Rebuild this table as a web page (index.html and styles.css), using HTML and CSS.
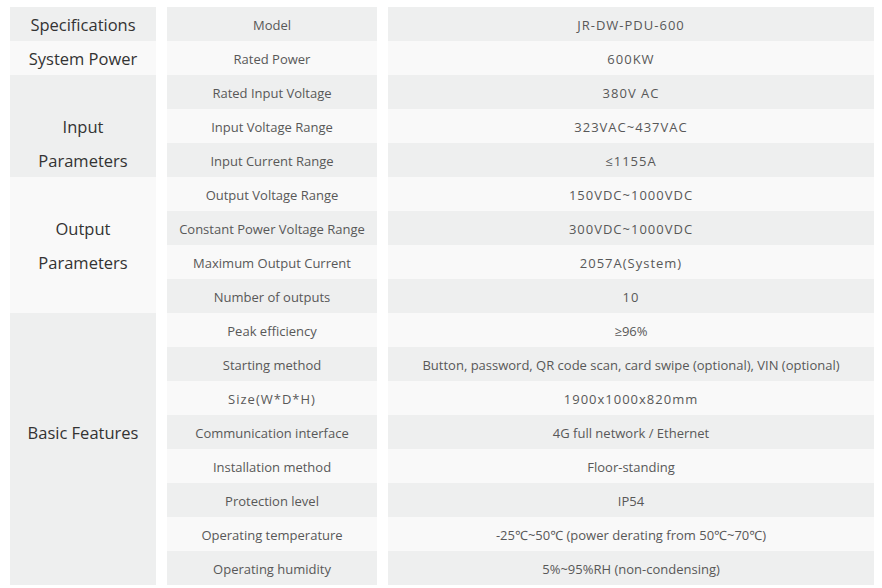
FILE: index.html
```html
<!DOCTYPE html>
<html>
<head>
<meta charset="utf-8">
<link rel="stylesheet" href="styles.css">
</head>
<body>
<div class="spec">
  <div class="group dark">Specifications</div>
  <div class="label dark">Model</div>
  <div class="value dark num">JR-DW-PDU-600</div>

  <div class="group light">System Power</div>
  <div class="label light">Rated Power</div>
  <div class="value light num">600KW</div>

  <div class="group dark span3 pad-top">Input<br>Parameters</div>
  <div class="label dark">Rated Input Voltage</div>
  <div class="value dark num">380V AC</div>
  <div class="label light">Input Voltage Range</div>
  <div class="value light num">323VAC~437VAC</div>
  <div class="label dark">Input Current Range</div>
  <div class="value dark num">≤1155A</div>

  <div class="group light span4">Output<br>Parameters</div>
  <div class="label light">Output Voltage Range</div>
  <div class="value light num">150VDC~1000VDC</div>
  <div class="label dark">Constant Power Voltage Range</div>
  <div class="value dark num">300VDC~1000VDC</div>
  <div class="label light">Maximum Output Current</div>
  <div class="value light num">2057A(System)</div>
  <div class="label dark">Number of outputs</div>
  <div class="value dark num">10</div>

  <div class="group dark span8 pad-bottom">Basic Features</div>
  <div class="label light">Peak efficiency</div>
  <div class="value light">≥96%</div>
  <div class="label dark">Starting method</div>
  <div class="value dark">Button, password, QR code scan, card swipe (optional), VIN (optional)</div>
  <div class="label light num">Size(W*D*H)</div>
  <div class="value light num">1900x1000x820mm</div>
  <div class="label dark">Communication interface</div>
  <div class="value dark">4G full network / Ethernet</div>
  <div class="label light">Installation method</div>
  <div class="value light">Floor-standing</div>
  <div class="label dark">Protection level</div>
  <div class="value dark">IP54</div>
  <div class="label light">Operating temperature</div>
  <div class="value light">-25℃~50℃ (power derating from 50℃~70℃)</div>
  <div class="label dark">Operating humidity</div>
  <div class="value dark">5%~95%RH (non-condensing)</div>
</div>
</body>
</html>
```
FILE: styles.css
```css
html, body {
  margin: 0;
  padding: 0;
  background: #ffffff;
}
.spec {
  display: grid;
  grid-template-columns: 146px 210px 486px;
  grid-auto-rows: 34px;
  column-gap: 11px;
  padding: 7px 0 0 10px;
  font-family: "Open Sans", "Noto Sans", sans-serif;
}
.dark { background: #eeefef; }
.light { background: #f9f9f9; }
.group {
  grid-column: 1;
  display: flex;
  align-items: center;
  justify-content: center;
  text-align: center;
  font-size: 16.5px;
  line-height: 34px;
  color: #333333;
  padding-top: 1px;
}
.span3 { grid-row: span 3; }
.span4 { grid-row: span 4; }
.span8 { grid-row: span 8; }
.group.pad-top { padding-top: 35px; }
.group.pad-bottom { padding-bottom: 34px; }
.label, .value {
  display: flex;
  align-items: center;
  justify-content: center;
  font-size: 13px;
  color: #585858;
  white-space: nowrap;
  padding-top: 1px;
}
.label { grid-column: 2; }
.value { grid-column: 3; }
.num { letter-spacing: 1px; }
```
